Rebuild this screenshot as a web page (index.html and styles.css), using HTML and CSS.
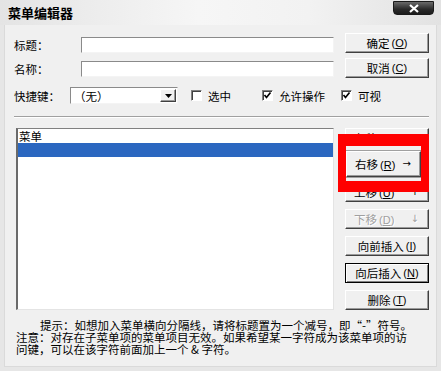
FILE: index.html
```html
<html>
<head>
	<title>菜单编辑器</title>
	<link rel="stylesheet" href="styles.css">
</head>
<body>
<div class="win">
	<div class="titlebar">
		<span class="title">菜单编辑器</span>
		<span class="close"><svg width="12" height="9" viewBox="0 0 12 9"><path d="M2 1 L10 8 M10 1 L2 8" stroke="#fff" stroke-width="2.2"/></svg></span>
	</div>

	<div class="client">
		<div class="top">
			<div class="fields">
				<div class="row r1"><span class="lbl">标题：</span><span class="edit"></span></div>
				<div class="row r2"><span class="lbl">名称：</span><span class="edit"></span></div>
				<div class="row r3">
					<span class="lbl short">快捷键：</span>
					<span class="combo"><span class="combo-text">（无）</span><span class="drop"><svg width="7" height="4" viewBox="0 0 7 4"><path d="M0 0 H7 L3.5 4 Z" fill="#000"/></svg></span></span>
					<span class="chk c1"><span class="box"></span>选中</span>
					<span class="chk c2"><span class="box"><svg width="9" height="9" viewBox="0 0 9 9"><path d="M1.5 4 L3.5 6.5 L7.5 1.5" stroke="#000" stroke-width="1.7" fill="none"/></svg></span>允许操作</span>
					<span class="chk"><span class="box"><svg width="9" height="9" viewBox="0 0 9 9"><path d="M1.5 4 L3.5 6.5 L7.5 1.5" stroke="#000" stroke-width="1.7" fill="none"/></svg></span>可视</span>
				</div>
			</div>
			<div class="btncol top-btns">
				<div class="btn">确定 <span class="key">(<u>O</u>)</span></div>
				<div class="btn">取消 <span class="key">(<u>C</u>)</span></div>
			</div>
		</div>

		<div class="sep"></div>

		<div class="main">
			<div class="list">
				<div class="item">菜单</div>
				<div class="item sel"></div>
			</div>
			<div class="btncol side">
				<div class="btn arrow"><span>左移<span class="key">(<u>L</u>)</span></span><span class="ar">←</span></div>
				<div class="btn arrow"><span>右移<span class="key">(<u>R</u>)</span></span><span class="ar">→</span></div>
				<div class="btn arrow"><span>上移<span class="key">(<u>U</u>)</span></span><span class="ar">↑</span></div>
				<div class="btn arrow off"><span>下移<span class="key">(<u>D</u>)</span></span><span class="ar">↓</span></div>
				<div class="btn">向前插入 <span class="key">(<u>I</u>)</span></div>
				<div class="btn default">向后插入 <span class="key">(<u>N</u>)</span></div>
				<div class="btn">删除 <span class="key">(<u>T</u>)</span></div>
			</div>
		</div>

		<div class="hint">
			<div class="first">提示：如想加入菜单横向分隔线，请将标题置为一个减号，即“-”符号。</div>
			<div>注意：对存在子菜单项的菜单项目无效。如果希望某一字符成为该菜单项的访</div>
			<div>问键，可以在该字符前面加上一个 &amp; 字符。</div>
		</div>
	</div>

	<!-- red highlight frame drawn over the button column -->
	<div class="mark">
		<div class="mark-line"></div>
		<div class="btn arrow mbtn"><span>右移<span class="key">(<u>R</u>)</span></span><span class="ar">→</span></div>
		<div class="mark-line low"></div>
	</div>
</div>
</body>
</html>
```

FILE: styles.css
```css
body {margin:0; background:#fff; font-family:"Noto Sans CJK SC", "Liberation Sans", sans-serif; font-size:11.5px; color:#000;}
.win {position:relative; width:441px; height:371px; background:#e6e6e6; display:flex; flex-direction:column; overflow:hidden;}

.titlebar {height:25px; flex:none; display:flex; justify-content:space-between; align-items:flex-start; padding:0 7px 0 8px; background:linear-gradient(to right, #e4e4e4, #f6f6f6 45%, #f2f2f2 70%, #e2e2e2);}
.title {font-weight:bold; font-size:13px; line-height:25px;}
.close {margin-top:1px; width:41px; height:14px; box-sizing:border-box; border:1px solid #1a1a1a; border-radius:0 0 4px 4px; background:linear-gradient(#6a6a6a, #2a2a2a 60%, #1c1c1c); display:flex; align-items:center; justify-content:center;}

.client {flex:1; margin:0 4px 4px 4px; padding-left:9px; background:#f0f0f0; border:1px solid #dadada; border-top:none;}

.top {display:flex; gap:11px; padding-top:8px;}
.fields {width:320px; flex:none; display:flex; flex-direction:column;}
.row {display:flex; align-items:center; white-space:nowrap;}
.r1 {margin-top:4px; height:16px;}
.r2 {margin-top:8px; height:16px;}
.r3 {margin-top:10px; height:17px;}
.lbl {width:67px; flex:none;}
.lbl.short {width:56px;}
.edit {width:253px; height:16px; flex:none; box-sizing:border-box; background:#fff; border:1px solid; border-color:#8a8a8a #f4f4f4 #f4f4f4 #8a8a8a;}

.combo {width:108px; height:17px; flex:none; box-sizing:border-box; background:#fff; border:1px solid; border-color:#8a8a8a #f4f4f4 #f4f4f4 #8a8a8a; display:flex; align-items:center; justify-content:space-between; padding:0 1px 0 3px;}
.combo-text {line-height:14px;}
.drop {width:16px; height:13px; box-sizing:border-box; background:#f0f0f0; border:1px solid; border-color:#fff #404040 #404040 #fff; box-shadow:inset -1px -1px 0 #999; display:flex; align-items:center; justify-content:center;}

.chk {display:flex; flex:none; align-items:center; gap:6px;}
.chk.c1 {margin-left:13px; width:71px;}
.chk.c2 {width:79px;}
.box {width:11px; height:11px; flex:none; box-sizing:border-box; background:#fff; border:1px solid; border-color:#808080 #fff #fff #808080; box-shadow:inset 1px 1px 0 #404040; display:flex; align-items:center; justify-content:center;}

.btncol {width:84px; flex:none; display:flex; flex-direction:column;}
.top-btns {gap:5px;}
.btn {height:20px; box-sizing:border-box; background:#f0f0f0; border:1px solid; border-color:#fff #404040 #404040 #fff; box-shadow:inset -1px -1px 0 #9a9a9a; display:flex; align-items:center; justify-content:center; line-height:16px; white-space:nowrap;}
.btn .key {font-family:"Liberation Sans", sans-serif; font-size:11px; margin-left:2px;}
.btn .ar {font-family:"DejaVu Sans", sans-serif; font-size:10px; line-height:12px;}
.btn.arrow {justify-content:space-between; padding:0 9px 0 8px;}
.btn.off {color:#a0a0a0; text-shadow:1px 1px 0 #fff;}
.btn.default {border:1px solid #000; box-shadow:inset 1px 1px 0 #fff, inset -1px -1px 0 #808080;}

.sep {width:415px; margin-top:12px; border-top:1px solid #a0a0a0; border-bottom:1px solid #fff;}

.main {display:flex; gap:11px; margin-top:10px;}
.list {width:318px; height:182px; flex:none; margin-left:2px; box-sizing:border-box; background:#fff; border:1px solid; border-color:#808080 #e4e4e4 #e4e4e4 #6a6a6a; border-left-width:2px;}
.side {gap:7px;}
.item {height:14px; line-height:14px; padding-left:1px;}
.item.sel {background:#2b67c0;}

.hint {margin-top:9px; margin-left:2px; line-height:12px; white-space:nowrap;}
.hint div {height:12px;}
.hint .first {padding-left:24px;}

.mark {position:absolute; left:338px; top:134px; width:75px; height:35px; border:solid #f00; border-width:12px 8px 11px 8px; background:#f0f0f0; display:flex; flex-direction:column;}
.mark-line {height:5px; box-sizing:border-box; border-top:1px solid #f0f0f0; border-bottom:1px solid #a0a0a0; background:#f0f0f0;}
.mark-line.low {height:4px; border-top:1px solid #a0a0a0; border-bottom:none;}
.mbtn {flex:1; border-top-color:#fff; padding:0 3px 0 7px;}
```
